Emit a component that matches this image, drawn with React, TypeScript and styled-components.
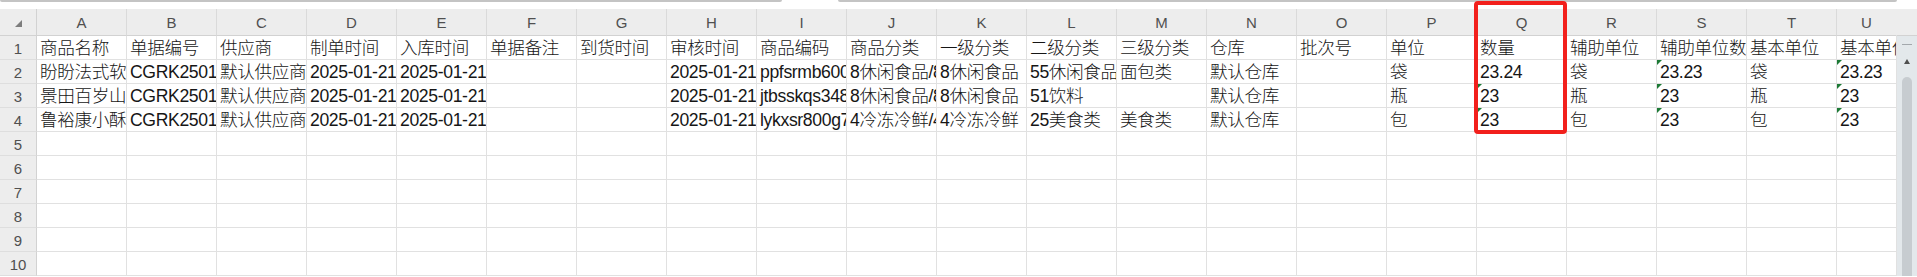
import styled, { createGlobalStyle } from "styled-components";

const columns = "ABCDEFGHIJKLMNOPQRSTU".split("");

const rows: string[][] = [
    ["商品名称", "单据编号", "供应商", "制单时间", "入库时间", "单据备注", "到货时间", "审核时间", "商品编码", "商品分类", "一级分类", "二级分类", "三级分类", "仓库", "批次号", "单位", "数量", "辅助单位", "辅助单位数量", "基本单位", "基本单位数量"],
    ["盼盼法式软面包", "CGRK2501210001", "默认供应商", "2025-01-21", "2025-01-21", "", "", "2025-01-21", "ppfsrmb600g", "8休闲食品/8休闲食品/55休闲食品", "8休闲食品", "55休闲食品", "面包类", "默认仓库", "", "袋", "23.24", "袋", "23.23", "袋", "23.23"],
    ["景田百岁山矿泉水", "CGRK2501210002", "默认供应商", "2025-01-21", "2025-01-21", "", "", "2025-01-21", "jtbsskqs348ml", "8休闲食品/8休闲食品/51饮料", "8休闲食品", "51饮料", "", "默认仓库", "", "瓶", "23", "瓶", "23", "瓶", "23"],
    ["鲁裕康小酥肉", "CGRK2501210003", "默认供应商", "2025-01-21", "2025-01-21", "", "", "2025-01-21", "lykxsr800g7", "4冷冻冷鲜/4冷冻冷鲜/25美食类", "4冷冻冷鲜", "25美食类", "美食类", "默认仓库", "", "包", "23", "包", "23", "包", "23"],
];

// 文本格式数字的绿色小三角
const textNumbers = new Set(["3-Q", "4-Q", "2-S", "3-S", "4-S", "2-U", "3-U", "4-U"]);

const GlobalStyle = createGlobalStyle`
    html, body {
        margin: 0;
        padding: 0;
        background: #ffffff;
        overflow: hidden;
    }
`;

const Page = styled.div`
    position: relative;
    display: flex;
    flex-direction: column;
    width: 1917px;
    height: 277px;
    overflow: hidden;
    background: #ffffff;
    font-family: "Liberation Sans", "Noto Sans CJK SC", sans-serif;
`;

const TopBar = styled.div`
    display: flex;
    gap: 56px;
    height: 9px;
    flex-shrink: 0;
`;

const TopSegment = styled.div<{ $width: number }>`
    width: ${({ $width }) => $width}px;
    height: 2px;
    background: #c4c4c4;
    border-radius: 0 0 2px 2px;
`;

const Sheet = styled.div`
    display: grid;
    grid-template-columns: 37px repeat(20, 90px) 60px 20px;
    grid-template-rows: 27px repeat(10, 24px);
`;

const Corner = styled.div`
    display: flex;
    justify-content: flex-end;
    align-items: flex-end;
    padding: 0 14px 8px 0;
    background: #ededed;
    border-right: 1px solid #d2d2d2;
    border-bottom: 1px solid #d2d2d2;
    box-sizing: border-box;
`;

const CornerArrow = styled.div`
    width: 0;
    height: 0;
    border-left: 7px solid transparent;
    border-bottom: 7px solid #7d7d7d;
`;

const ColHeader = styled.div<{ $last?: boolean }>`
    background: #ededed;
    border-right: 1px solid ${({ $last }) => ($last ? "#ededed" : "#dadada")};
    border-bottom: 1px solid #d2d2d2;
    box-sizing: border-box;
    padding-top: 2px;
    text-align: center;
    font-size: 15px;
    line-height: 24px;
    color: #505050;
`;

const HeaderFill = styled.div`
    background: #ededed;
    border-bottom: 1px solid #d2d2d2;
    box-sizing: border-box;
`;

const RowHeader = styled.div`
    background: #ededed;
    border-right: 1px solid #d2d2d2;
    border-bottom: 1px solid #dedede;
    box-sizing: border-box;
    padding-top: 1px;
    text-align: center;
    font-size: 15px;
    line-height: 23px;
    color: #505050;
`;

const Cell = styled.div`
    position: relative;
    border-right: 1px solid #e1e1e1;
    border-bottom: 1px solid #e1e1e1;
    box-sizing: border-box;
    padding: 2px 0 0 3px;
    font-size: 17.6px;
    font-weight: 300;
    letter-spacing: -0.35px;
    line-height: 21px;
    color: #161616;
    white-space: nowrap;
    overflow: hidden;
`;

const GreenMark = styled.span`
    position: absolute;
    top: 0;
    left: 0;
    width: 0;
    height: 0;
    border-top: 5px solid #1d7a36;
    border-right: 5px solid transparent;
`;

const ScrollTrack = styled.div`
    grid-column: 23;
    grid-row: 2 / span 10;
    display: flex;
    flex-direction: column;
    align-items: center;
    padding-top: 8px;
    background: #e3e8eb;
`;

const ScrollDash = styled.div`
    width: 10px;
    height: 1px;
    background: #a3a8ac;
`;

const ScrollArrow = styled.div`
    margin-top: 14px;
    width: 0;
    height: 0;
    border-left: 3px solid transparent;
    border-right: 3px solid transparent;
    border-bottom: 5px solid #4f4f4f;
`;

const ScrollThumb = styled.div`
    margin-top: 13px;
    flex: 1;
    width: 10px;
    background: #c7ccd0;
    border-radius: 5px 5px 0 0;
`;

const Highlight = styled.div`
    position: absolute;
    left: 1474px;
    top: 1px;
    width: 93px;
    height: 133px;
    border: 4px solid #f2201c;
    border-radius: 4px;
    box-sizing: border-box;
    pointer-events: none;
`;

const App = () => {
    return (
        <Page>
            <GlobalStyle />
            <TopBar>
                <TopSegment $width={782} />
                <TopSegment $width={1059} />
            </TopBar>
            <Sheet>
                <Corner>
                    <CornerArrow />
                </Corner>
                {columns.map((col, index) => (
                    <ColHeader key={col} $last={index === columns.length - 1}>
                        {col}
                    </ColHeader>
                ))}
                <HeaderFill />
                <ScrollTrack>
                    <ScrollDash />
                    <ScrollArrow />
                    <ScrollThumb />
                </ScrollTrack>
                {Array.from({ length: 10 }, (_, r) => (
                    <>
                        <RowHeader key={`h${r}`}>{r + 1}</RowHeader>
                        {columns.map((col, c) => (
                            <Cell key={`${r}-${col}`}>
                                {textNumbers.has(`${r + 1}-${col}`) && <GreenMark />}
                                {rows[r]?.[c] ?? ""}
                            </Cell>
                        ))}
                    </>
                ))}
            </Sheet>
            <Highlight />
        </Page>
    );
};

export default App;
